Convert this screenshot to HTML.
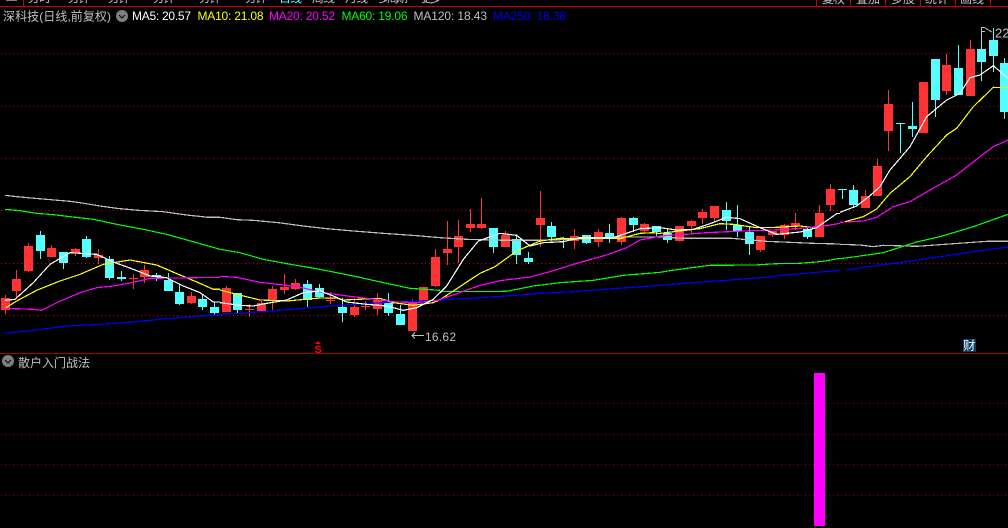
<!DOCTYPE html>
<html><head><meta charset="utf-8"><style>
html,body{margin:0;padding:0;background:#000;width:1008px;height:528px;overflow:hidden}
svg{display:block}
text{font-family:"Liberation Sans",sans-serif}
.cjk{font-family:"Liberation Sans","WenQuanYi Zen Hei","Noto Sans CJK SC",sans-serif}
.ma{font-size:12px}
polyline{fill:none;stroke-width:1.2;vector-effect:non-scaling-stroke;shape-rendering:crispEdges}
</style></head><body>
<svg width="1008" height="528" viewBox="0 0 1008 528" xmlns="http://www.w3.org/2000/svg">
<rect width="1008" height="528" fill="#000"/>
<g stroke="#c80000" stroke-dasharray="1 3" shape-rendering="crispEdges" stroke-width="1" fill="none">
<path d="M1 53.5H1008M1 106.5H1008M1 158.5H1008M1 210.5H1008M1 263.5H1008M1 315.5H1008"/>
<path stroke="#a00000" d="M1 403.5H1008M1 434.5H1008M1 464.5H1008M1 495.5H1008"/>
</g>
<g shape-rendering="crispEdges" fill="none">
<g transform="translate(0 176) scale(1 .33333)">
<path stroke="#ff3333" stroke-width="1" d="M5.5 357V414M16.5 282V363M28.5 201V288M51.5 207V243M75.5 216V240M98.5 219V264M133.5 294V339M144.5 267V321M191.5 348V384M226.5 330V408M249.5 384V423M261.5 375V405M272.5 330V405M284.5 294V354M295.5 309V342M330.5 348V384M354.5 366V423M365.5 375V402M377.5 351V417M412.5 369V465M423.5 333V378M435.5 219V333M447.5 135V267M458.5 132V261M470.5 99V168M481.5 66V159M505.5 165V213M540.5 45V213M574.5 159V219M598.5 159V213M621.5 123V207M644.5 141V174M679.5 150V197M691.5 132V174M702.5 99V144M714.5 90V138M760.5 180V228M772.5 165V183M784.5 144V189M795.5 111V162M819.5 87V183M830.5 24V105"/>
<path stroke="#ff3333" stroke-width="9" d="M5.5 366V402M16.5 309V345M28.5 210V285M51.5 216V243M75.5 219V231M98.5 237V246M133.5 306V309M144.5 282V303M191.5 360V381M226.5 336V408M249.5 399V402M261.5 381V405M272.5 339V375M284.5 333V342M295.5 321V339M330.5 366V369M330.5 372V375M354.5 393V417M365.5 390V393M377.5 372V399M412.5 381V465M423.5 333V378M435.5 243V330M447.5 219V231M458.5 180V213M470.5 144V156M481.5 144V156M505.5 177V213M540.5 126V147M574.5 180V195M598.5 168V198M621.5 126V198M644.5 144V165M679.5 150V195M691.5 135V150M702.5 108V126M714.5 90V126M760.5 180V222M772.5 165V177M784.5 147V177M795.5 141V150M819.5 111V183M830.5 39V87"/>
<path stroke="#55ffff" stroke-width="1" d="M40.5 165V249M63.5 228V279M86.5 180V246M109.5 240V312M121.5 285V315M156.5 291V315M168.5 291V345M179.5 324V387M202.5 357V402M214.5 378V417M237.5 351V411M307.5 312V393M319.5 324V366M342.5 366V438M388.5 351V420M400.5 387V447M493.5 156V231M516.5 180V264M528.5 228V264M551.5 138V195M563.5 183V216M586.5 177V204M609.5 144V201M633.5 123V168M656.5 150V180M667.5 156V201M726.5 78V162M737.5 87V183M749.5 150V237M807.5 153V189"/>
<path stroke="#55ffff" stroke-width="9" d="M40.5 177V225M63.5 228V261M86.5 189V243M109.5 249V306M121.5 303V309M156.5 297V303M168.5 312V345M179.5 348V384M202.5 369V393M214.5 393V411M237.5 351V402M307.5 324V372M319.5 336V363M342.5 393V411M388.5 381V411M400.5 414V447M493.5 156V213M516.5 189V237M528.5 246V258M551.5 150V183M563.5 186V189M586.5 177V201M609.5 171V186M633.5 126V147M656.5 150V168M667.5 171V192M726.5 102V135M737.5 147V165M749.5 168V204M807.5 159V183"/>
</g>
<g transform="translate(0 30) scale(1 .33333)">
<path stroke="#ff3333" stroke-width="1" d="M865.5 480V534M877.5 387V498M888.5 180V363M923.5 156V309M946.5 72V195M970.5 30V198"/>
<path stroke="#ff3333" stroke-width="9" d="M865.5 498V534M877.5 408V498M888.5 222V303M923.5 156V309M946.5 105V183M970.5 57V198"/>
<path stroke="#55ffff" stroke-width="1" d="M842.5 477V507M853.5 465V534M900.5 279V369M912.5 216V321M935.5 87V261M958.5 45V195M981.5 -6V153M993.5 -6V126M1004.5 84V267"/>
<path stroke="#55ffff" stroke-width="9" d="M842.5 477V480M853.5 480V525M900.5 279V282M912.5 288V297M935.5 87V210M958.5 114V195M981.5 57V96M993.5 30V78M1004.5 99V246"/>
</g>
</g>
<g transform="translate(0 176) scale(.33333)">
<polyline stroke="#c0c0c0" points="15,58 50,62 105,67 140,70 175,73 210,76 240,80 300,90 350,97 415,103 490,107 560,117 625,124 660,124"/>
<polyline stroke="#00ff00" points="15,100 60,104 110,112 160,116 210,122 280,130 350,145 430,160 500,175 590,200 660,220"/>
<polyline stroke="#0000ff" points="15,472 100,463 200,450 300,445 400,438 500,428 600,420 660,416"/>
<polyline stroke="#ffff00" points="15,397 50,375 110,343 180,315 240,295 310,265 390,252 470,267 540,297 600,322 640,340 660,340"/>
<polyline stroke="#ff00ff" points="15,397 100,400 125,403 175,378 240,350 290,335 340,330 400,319 450,307 660,304"/>
<polyline stroke="#ffffff" points="15,373 45,370 100,320 150,265 210,230 290,235 340,258 400,280 450,300 500,305 550,330 600,350 640,378 660,378"/>
</g>
<g transform="translate(220 176) scale(.33333)">
<polyline stroke="#c0c0c0" points="0,124 50,131 100,133 175,140 250,150 320,158 400,165 490,172 590,179 660,185"/>
<polyline stroke="#00ff00" points="0,220 60,230 130,250 200,263 300,280 400,300 500,322 570,337 660,343"/>
<polyline stroke="#0000ff" points="0,414 60,412 150,405 250,397 350,388 450,382 660,372"/>
<polyline stroke="#ffff00" points="0,342 50,355 120,372 200,375 300,366 350,366 370,372 480,367 520,380 580,388 640,380 660,371"/>
<polyline stroke="#ff00ff" points="0,301 50,304 120,319 200,328 250,336 310,350 390,361 450,368 530,378 590,380 660,372"/>
<polyline stroke="#ffffff" points="0,380 60,388 100,390 140,382 200,372 250,350 300,345 340,360 380,378 440,385 500,390 550,403 590,395 640,370 660,350"/>
</g>
<g transform="translate(440 176) scale(.33333)">
<polyline stroke="#c0c0c0" points="0,185 80,190 200,193 280,193 400,190 550,183 660,183"/>
<polyline stroke="#00ff00" points="0,347 200,346 280,330 360,320 460,313 550,298 660,289"/>
<polyline stroke="#0000ff" points="0,372 100,366 200,360 300,352 400,347 520,338 660,328"/>
<polyline stroke="#ffff00" points="0,371 40,345 120,292 165,272 230,225 300,195 360,187 540,188 600,172 640,170 660,173"/>
<polyline stroke="#ff00ff" points="0,370 50,353 120,328 180,314 270,303 340,284 400,265 500,237 560,215 600,192 640,185 660,180"/>
<polyline stroke="#ffffff" points="0,350 20,330 70,250 115,195 180,172 230,178 270,210 310,200 370,197 420,185 520,185 600,158 660,155"/>
</g>
<g transform="translate(660 176) scale(.33333)">
<polyline stroke="#c0c0c0" points="0,183 78,187 215,187 285,193 320,196 390,199 460,202 540,204"/>
<polyline stroke="#00ff00" points="0,289 30,284 80,277 150,268 285,267 350,263 420,262 490,256 540,247"/>
<polyline stroke="#0000ff" points="0,328 100,320 200,313 300,305 400,295 540,283"/>
<polyline stroke="#ffff00" points="0,172 50,166 120,158 180,143 220,145 290,155 350,154 420,150 460,155"/>
<polyline stroke="#ff00ff" points="0,180 75,175 140,170 250,165 340,162 420,157 500,149 540,142"/>
<polyline stroke="#ffffff" points="0,155 50,162 100,160 150,143 200,124 240,128 300,155 350,175 420,168 470,155 530,113 540,112"/>
</g>
<g transform="translate(840 30) scale(.33333)">
<polyline stroke="#c0c0c0" points="0,643 60,645 100,650 130,646 230,649 300,644 440,634 504,634"/>
<polyline stroke="#00ff00" points="0,686 40,681 130,668 180,652 230,636 300,620 400,590 504,553"/>
<polyline stroke="#0000ff" points="20,720 100,708 200,695 300,680 400,665 504,651"/>
<polyline stroke="#ff00ff" points="0,577 70,573 110,562 160,530 210,515 270,480 350,435 420,380 460,350 504,330"/>
<polyline stroke="#ffff00" points="15,575 70,560 110,537 150,490 210,440 260,380 320,315 350,295 400,230 460,172 504,173"/>
<polyline stroke="#ffffff" points="0,547 50,528 90,497 120,470 150,420 210,350 260,260 320,210 360,190 390,143 420,135 460,107 504,145"/>
</g>
<g class="cjk" font-size="12" fill="#c0c0c0">
<text class="cjk" x="28" y="2" textLength="23">分时</text>
<text class="cjk" x="68" y="2" textLength="22">分钟</text>
<text class="cjk" x="108" y="2" textLength="22">分钟</text>
<text class="cjk" x="153" y="2" textLength="22">分钟</text>
<text class="cjk" x="199" y="2" textLength="22">分钟</text>
<text class="cjk" x="245" y="2" textLength="22">分钟</text>
<text class="cjk" x="279" y="2" textLength="23" fill="#55ffff">日线</text>
<text class="cjk" x="312" y="2" textLength="23">周线</text>
<text class="cjk" x="345" y="2" textLength="23">月线</text>
<text class="cjk" x="378" y="2" textLength="30">多周期</text>
<text class="cjk" x="421" y="2" textLength="21">更多</text>
<text class="cjk" x="822" y="3" textLength="23">复权</text>
<text class="cjk" x="856" y="3" textLength="24">叠加</text>
<text class="cjk" x="891" y="3" textLength="24">多股</text>
<text class="cjk" x="925" y="3" textLength="24">统计</text>
<text class="cjk" x="960" y="3" textLength="24">画线</text>
</g>
<g shape-rendering="crispEdges">
<rect x="0" y="6" width="1008" height="1" fill="#c80000"/>
<rect x="23" y="0" width="1" height="6" fill="#c80000"/>
<rect x="6" y="0" width="11" height="1" fill="#808080"/>
<path d="M816.5 0V6M850.5 0V6M885.5 0V6M920.5 0V6M955.5 0V6M990.5 0V6" stroke="#c80000" fill="none"/>
<rect x="0" y="353" width="1008" height="1" fill="#a80000"/>
<rect x="814" y="373" width="11" height="153" fill="#ff00ff"/>
</g>
<text class="cjk" x="3" y="20.500" font-size="12" fill="#c0c0c0" textLength="108">深科技(日线,前复权)</text>
<circle cx="122" cy="16" r="6" fill="#808080"/>
<path d="M119 15l3 3 3-3" stroke="#111" stroke-width="1.2" fill="none"/>
<text class="ma" x="132" y="20" fill="#ffffff" textLength="59">MA5: 20.57</text>
<text class="ma" x="197.500" y="20" fill="#ffff00" textLength="66">MA10: 21.08</text>
<text class="ma" x="269" y="20" fill="#ff00ff" textLength="66">MA20: 20.52</text>
<text class="ma" x="341.500" y="20" fill="#00ff00" textLength="66">MA60: 19.06</text>
<text class="ma" x="413.500" y="20" fill="#c0c0c0" textLength="73.500">MA120: 18.43</text>
<text class="ma" x="493" y="20" fill="#0000ee" textLength="73">MA250: 18.38</text>
<circle cx="8" cy="361" r="6" fill="#808080"/>
<path d="M5 360l3 3 3-3" stroke="#111" stroke-width="1.2" fill="none"/>
<text class="cjk" x="18" y="367" font-size="12" fill="#c0c0c0" textLength="72">散户入门战法</text>
<path d="M424 335.500H412M415 332.500L412 335.500L415 338.500" stroke="#c0c0c0" fill="none" shape-rendering="crispEdges"/>
<text x="425" y="341" font-size="12" fill="#c0c0c0" textLength="31">16.62</text>
<path d="M981.500 38V27.500H985M981.500 31.500H985M985 28L992 32" stroke="#c0c0c0" fill="none" shape-rendering="crispEdges"/>
<text x="995" y="37.500" font-size="13" fill="#c0c0c0">22</text>
<path d="M318 341l3 3h-6z" fill="#ff0000"/>
<text x="314.500" y="353" font-size="11" font-weight="bold" fill="#ff0000">S</text>
<rect x="963" y="339" width="13" height="13" fill="#0a3a66"/>
<text class="cjk" x="963" y="350" font-size="12.500" fill="#ffffff">财</text>
</svg>
</body></html>
